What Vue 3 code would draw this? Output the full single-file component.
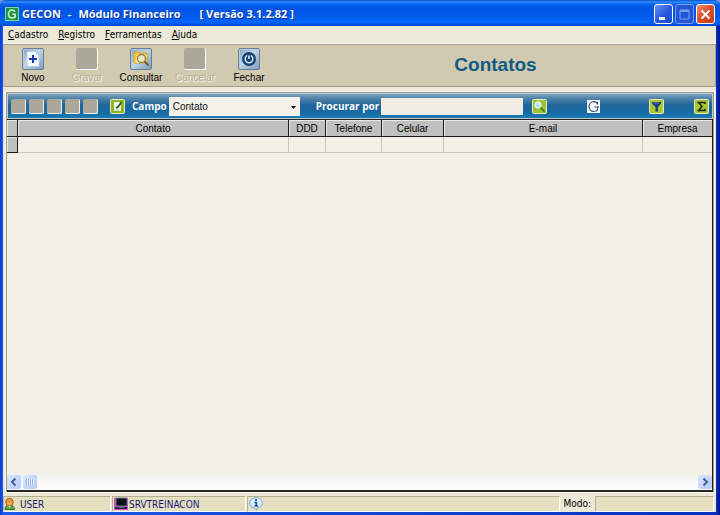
<script setup>
import { ref } from 'vue'

const menus = ['Cadastro', 'Registro', 'Ferramentas', 'Ajuda']
const tools = [
  { label: 'Novo', icon: 'new' },
  { label: 'Gravar', icon: '', disabled: true },
  { label: 'Consultar', icon: 'find' },
  { label: 'Cancelar', icon: '', disabled: true },
  { label: 'Fechar', icon: 'power' },
]
const navigation = ['Primeiro', 'Anterior', 'Próximo', 'Último', 'Atualizar']
const columns = [
  { label: 'Contato', name: 'contact' },
  { label: 'DDD', name: 'ddd' },
  { label: 'Telefone', name: 'phone' },
  { label: 'Celular', name: 'mobile' },
  { label: 'E-mail', name: 'email' },
  { label: 'Empresa', name: 'company' },
]
const field = ref('Contato')
const query = ref('')
</script>

<template>
  <div class="window">
    <header class="titlebar">
      <svg class="app-icon" viewBox="0 0 14 14" aria-hidden="true">
        <rect width="14" height="14" rx="1" fill="#8fcf9c" />
        <rect x="1" y="1" width="12" height="12" fill="#169447" />
        <path d="M10 4.6C9.3 3.6 8.4 3.1 7 3.1C4.7 3.1 3.5 4.8 3.5 7S4.8 10.9 7 10.9C8.4 10.9 9.5 10.5 10.2 9.9V7.2H7.2" fill="none" stroke="#c9f0c9" stroke-width="1.6" />
      </svg>
      <h1 class="title">
        <span>GECON</span><span>-</span><span class="module">Módulo Financeiro</span><span>[ Versão 3.1.2.82 ]</span>
      </h1>
      <div class="controls">
        <button class="control" type="button" aria-label="Minimizar">
          <svg viewBox="0 0 17 17"><rect x="4" y="11" width="6" height="3" fill="#fff" /></svg>
        </button>
        <button class="control dimmed" type="button" aria-label="Maximizar" disabled>
          <svg viewBox="0 0 17 17"><path d="M4 4h9v9H4z" fill="none" stroke="#7e9df0" /><path d="M4 5h9" stroke="#7e9df0" stroke-width="2" /></svg>
        </button>
        <button class="control close" type="button" aria-label="Fechar janela">
          <svg viewBox="0 0 17 17"><path d="M4.500 4.500l8 8M12.500 4.500l-8 8" stroke="#fff" stroke-width="2" /></svg>
        </button>
      </div>
    </header>

    <div class="client">
      <nav class="menubar">
        <button v-for="menu in menus" :key="menu" class="menu" type="button"><u>{{ menu[0] }}</u>{{ menu.slice(1) }}</button>
      </nav>

      <div class="toolbar">
        <div class="tools">
          <button v-for="tool in tools" :key="tool.label" class="tool" type="button" :disabled="tool.disabled">
            <span v-if="tool.disabled" class="blank"></span>
            <svg v-else class="tool-icon" viewBox="0 0 22 22" aria-hidden="true">
              <defs>
                <linearGradient :id="'face-' + tool.icon" x1="0" y1="0" x2="1" y2="1">
                  <stop offset="0" stop-color="#7f9fbd" /><stop offset=".45" stop-color="#c4d6e6" /><stop offset="1" stop-color="#7899bb" />
                </linearGradient>
              </defs>
              <rect x=".5" y=".5" width="21" height="21" rx="1.5" :fill="'url(#face-' + tool.icon + ')'" stroke="#687f99" />
              <path d="M1.500 20V1.500H20" fill="none" stroke="#b7c8d8" />
              <g v-if="tool.icon === 'new'">
                <path d="M5 3.500h9l3 3v12H5z" fill="#f5faff" stroke="#b3cae4" />
                <path d="M14 3.500v3h3z" fill="#a7c3e4" />
                <path d="M11 7v8M7 11h8" stroke="#173bb5" stroke-width="2" />
              </g>
              <g v-else-if="tool.icon === 'find'">
                <path d="M4 15V6l1-2h4l1 1h7v10z" fill="#f2c542" stroke="#d4a32d" />
                <path d="M5 15l2-8h10l-2 8z" fill="#ffe27d" />
                <circle cx="11.500" cy="10.500" r="4" fill="#e8e9bd" stroke="#8e8250" stroke-width="1.300" />
                <path d="M14.500 13.500l4 4" stroke="#6d5a37" stroke-width="1.800" />
              </g>
              <g v-else>
                <circle cx="11" cy="11" r="7" fill="#124276" />
                <circle cx="11" cy="11" r="3.800" fill="none" stroke="#e8f3fb" stroke-width="1.500" />
                <path d="M11 6v5" stroke="#124276" stroke-width="3.500" /><path d="M11 7.500V11" stroke="#e8f3fb" stroke-width="1.500" />
              </g>
            </svg>
            <span class="tool-label">{{ tool.label }}</span>
          </button>
        </div>
        <h2 class="heading">Contatos</h2>
      </div>

      <main class="panel">
        <div class="filterbar">
          <div class="navigator">
            <button v-for="item in navigation" :key="item" class="nav-button" type="button" :aria-label="item" disabled></button>
          </div>
          <button class="icon-button edit" type="button" aria-label="Editar">
            <svg viewBox="0 0 15 15"><rect x=".5" y=".5" width="14" height="14" rx="1" fill="#8cb51f" stroke="#e4eec6" /><path d="M4 3h7v9H4z" fill="#f4f9ef" /><path d="M11.500 3L8 8l-2 1" fill="none" stroke="#34512c" stroke-width="1.700" /><path d="M5 11h4" stroke="#a6c4a6" /></svg>
          </button>
          <label class="caption" for="field">Campo</label>
          <div class="select-wrap">
            <select id="field" v-model="field" class="select">
              <option v-for="column in columns" :key="column.name">{{ column.label }}</option>
            </select>
            <svg class="arrow" viewBox="0 0 5 3" aria-hidden="true"><path d="M0 0h5L2.500 3z" fill="#111" /></svg>
          </div>
          <label class="caption search-caption" for="query">Procurar por</label>
          <input id="query" v-model="query" class="query" type="text" />
          <button class="icon-button search" type="button" aria-label="Procurar">
            <svg viewBox="0 0 15 15"><rect x=".5" y=".5" width="14" height="14" rx="1" fill="#9bc332" stroke="#e4eec6" /><circle cx="6" cy="6" r="3.200" fill="#b9e8ff" stroke="#eafaff" /><path d="M8.500 8.500l4 4" stroke="#476f24" stroke-width="1.700" /></svg>
          </button>
          <div class="right-icons">
            <button class="icon-button google" type="button" aria-label="Pesquisar na web">
              <svg viewBox="0 0 15 15"><path d="M1 1h13v13H1z" fill="#f8faff" /><path d="M11.500 5.500V2.800M11.500 5C11 3.500 9.700 2.700 7.800 2.700C5 2.700 3 4.800 3 7.600S5 12.500 7.800 12.500C9.400 12.500 10.700 12 11.500 11.200V8M8.300 8h4.700" fill="none" stroke="#33527f" stroke-width="1.200" /></svg>
            </button>
            <button class="icon-button" type="button" aria-label="Filtrar">
              <svg viewBox="0 0 15 15"><rect x=".5" y=".5" width="14" height="14" rx="1" fill="#a9c62c" stroke="#e4eec6" /><path d="M3 3h9v1.500L9 8v4.500H6.500V8L3 4.500z" fill="#173f8a" /><path d="M5 4h5" stroke="#6486bf" /></svg>
            </button>
            <button class="icon-button" type="button" aria-label="Somar">
              <svg viewBox="0 0 15 15"><rect x=".5" y=".5" width="14" height="14" rx="1" fill="#a9c62c" stroke="#e4eec6" /><path d="M11 5V3.500H4.500L8 7.400L4.500 11.500H11V9.800" fill="none" stroke="#172512" stroke-width="1.500" /></svg>
            </button>
          </div>
        </div>

        <div class="grid">
          <table class="table">
            <colgroup>
              <col class="marker" /><col v-for="column in columns" :key="column.name" :class="column.name" />
            </colgroup>
            <thead>
              <tr><th></th><th v-for="column in columns" :key="column.name" scope="col">{{ column.label }}</th></tr>
            </thead>
            <tbody>
              <tr><th scope="row"></th><td v-for="column in columns" :key="column.name"></td></tr>
            </tbody>
          </table>
          <div class="scrollbar">
            <div class="scroll-start">
              <button class="scroll-button" type="button" aria-label="Rolar para a esquerda"><svg viewBox="0 0 14 14"><path d="M8.500 3.500L5 7l3.500 3.500" fill="none" stroke="#45618f" stroke-width="2" /></svg></button>
              <div class="thumb"><svg viewBox="0 0 14 14"><path d="M3.500 4v6M5.500 4v6M7.500 4v6M9.500 4v6" stroke="#94b1ef" /><path d="M4.500 4v6M6.500 4v6M8.500 4v6M10.500 4v6" stroke="#eef4ff" /></svg></div>
            </div>
            <button class="scroll-button" type="button" aria-label="Rolar para a direita"><svg viewBox="0 0 14 14"><path d="M5.500 3.500L9 7l-3.500 3.500" fill="none" stroke="#45618f" stroke-width="2" /></svg></button>
          </div>
        </div>
      </main>

      <footer class="statusbar">
        <div class="status user">
          <svg class="status-icon" viewBox="1 0 13 14" aria-hidden="true"><path d="M1.500 12.500C1.500 9.500 3 8 6 8s5 1.500 5 4.500z" fill="#5ba83c" stroke="#357a2a" /><path d="M4.500 8L6 11l2-3z" fill="#fff" /><circle cx="6" cy="5" r="3.800" fill="#e8983f" stroke="#b06322" /><path d="M4 5q2 2 4 0v2q-2 2-4 0z" fill="#f4b565" /></svg>
          USER
        </div>
        <div class="status server">
          <svg class="status-icon" viewBox="0 0 14 14" aria-hidden="true"><path d="M0 1h14v12H0z" fill="#d24dc6" /><path d="M2 1h11v8H2z" fill="#0c101d" stroke="#777990" /><path d="M1 10h12v2H1z" fill="#22233a" /><path d="M5 9h5v2H5z" fill="#6d6d82" /></svg>
          SRVTREINACON
        </div>
        <div class="status info">
          <svg class="status-icon" viewBox="0 0 14 14" aria-hidden="true"><path d="M7 .7C3.300 .7 .7 3 .7 6c0 2.500 1.800 4.500 4.600 5L8 13.400V11c3.200-.4 5.300-2.500 5.300-5C13.300 3 10.700 .7 7 .7z" fill="#dcecff" stroke="#7da7cd" /><path d="M7 2v2M5.500 5.500H7.300V9M5.500 9h3.500" fill="none" stroke="#1556a3" stroke-width="1.700" /></svg>
        </div>
        <div class="mode">Modo:</div>
        <div class="status mode-value"></div>
      </footer>
    </div>
  </div>
</template>

<style>
body {
  background: #7e93d8;
}
</style>

<style scoped>
* {
  box-sizing: border-box;
}
button {
  margin: 0;
  padding: 0;
  border: 0;
  background: none;
  color: inherit;
  font: inherit;
}
svg {
  display: block;
}
.window {
  display: flex;
  flex-direction: column;
  min-height: 100vh;
  padding: 0 4px 3px 3px;
  border-radius: 6px 6px 0 0;
  background: linear-gradient(90deg, #0a3bd8 0, #1a5ae8 3px, #0831c0 calc(100% - 4px), #00138c 100%);
  color: #000;
  font-family: "DejaVu Sans Condensed", "DejaVu Sans", sans-serif;
  font-size: 10px;
}
.titlebar {
  display: flex;
  align-items: center;
  height: 26px;
  margin: 0 -4px 0 -3px;
  padding: 2px 5px 0 5px;
  border-radius: 6px 6px 0 0;
  background: linear-gradient(#0a50c8 0, #2f8cff 2px, #0a62ee 4px, #0054e3 8px, #0058ea 16px, #0066ff 22px, #0046cf 26px);
}
.app-icon {
  width: 14px;
  height: 14px;
  margin-right: 3px;
}
.title {
  display: flex;
  gap: 7px;
  margin: 0;
  color: #fff;
  font-family: "Open Sans", "Noto Sans", sans-serif;
  font-size: 11px;
  font-weight: 700;
  line-height: 20px;
  text-shadow: 1px 1px #06309a;
  white-space: pre;
}
.module {
  margin-right: 12px;
}
.controls {
  display: flex;
  gap: 2px;
  margin-left: auto;
}
.control {
  width: 19px;
  height: 20px;
  border: 1px solid #fff;
  border-radius: 3px;
  background: linear-gradient(135deg, #6b93f3, #2a5be0 50%, #1b49d0);
}
.control.dimmed {
  border-color: #7c9cf0;
  background: #2456da;
}
.control.close {
  background: linear-gradient(135deg, #f0977c, #dd4f2b 45%, #c53a14);
}
.client {
  display: flex;
  flex: 1;
  flex-direction: column;
  background: #ece9d8;
}
.menubar {
  display: flex;
  gap: 10px;
  height: 18px;
  padding: 0 5px;
  border-bottom: 1px solid #fff;
  background: #ece9d8;
}
.menu {
  line-height: 16px;
}
.toolbar {
  display: flex;
  height: 43px;
  border: 1px solid #a29c88;
  border-left-color: #c5bea6;
  background: #d2cab0;
}
.tools {
  display: flex;
  margin-left: 2px;
}
.tool {
  display: flex;
  flex-direction: column;
  align-items: center;
  gap: 1px;
  width: 54px;
  padding-top: 3px;
  font-family: "Liberation Sans", sans-serif;
}
.tool-icon {
  width: 22px;
  height: 22px;
}
.blank {
  width: 22px;
  height: 22px;
  border: solid #fff;
  border-width: 0 1px 1px 0;
  border-radius: 2px;
  background: #aca899;
}
.tool-label {
  line-height: 13px;
}
.tool:disabled {
  color: #b9b29c;
  text-shadow: 1px 1px #f4f1e6;
}
.heading {
  flex: 1;
  margin: 0;
  color: #0f5a84;
  font-family: "Liberation Sans", sans-serif;
  font-size: 19px;
  font-weight: 700;
  line-height: 40px;
  text-align: center;
}
.panel {
  display: flex;
  flex: 1;
  flex-direction: column;
  margin: 5px 2px 4px 3px;
  border: 1px solid #9d9a8b;
  border-bottom: 0;
  outline: 1px solid #f8f6ee;
}
.filterbar {
  display: flex;
  align-items: center;
  height: 26px;
  padding: 0 3px;
  border: 1px solid #b9c9d0;
  background: linear-gradient(#7ba1bb 0, #4b80a8 5px, #20649a 11px, #1669a3 18px, #1c7bb4 100%);
}
.navigator {
  display: flex;
  gap: 3px;
}
.nav-button {
  width: 15px;
  height: 15px;
  border: solid #f1f0e8;
  border-width: 0 1px 1px 0;
  border-radius: 2px;
  background: #aca899;
}
.icon-button {
  flex: none;
  width: 15px;
  height: 15px;
}
.edit {
  margin: 0 7px 0 12px;
}
.caption {
  color: #fff;
  font-family: "Open Sans", "Noto Sans", sans-serif;
  font-size: 10px;
  font-weight: 700;
  line-height: 18px;
  white-space: nowrap;
}
.select-wrap {
  position: relative;
  flex: none;
  width: 131px;
  margin-left: 2px;
}
.select {
  display: block;
  appearance: none;
  width: 100%;
  height: 19px;
  padding: 0 14px 0 4px;
  border: 0;
  border-radius: 0;
  background: #f3f1e9;
  color: #111;
  font-family: "Liberation Sans", sans-serif;
  font-size: 10px;
}
.arrow {
  position: absolute;
  top: 9px;
  right: 4px;
  width: 5px;
  height: 3px;
  pointer-events: none;
}
.search-caption {
  margin-left: 16px;
}
.query {
  width: 142px;
  height: 17px;
  margin-left: 2px;
  padding: 0 3px;
  border: 0;
  background: #f0ede5;
  font: 10px "Liberation Sans", sans-serif;
}
.search {
  margin-left: 9px;
}
.right-icons {
  display: flex;
  flex: 1;
  justify-content: space-between;
  margin-left: 39px;
}
.google {
  margin-right: 18px;
}
.grid {
  display: flex;
  flex: 1;
  flex-direction: column;
  border: solid #26251f;
  border-width: 1px 1px 2px 0;
  background: #f3f0e8;
}
.table {
  width: 100%;
  border-collapse: separate;
  border-spacing: 0;
  table-layout: fixed;
  font-family: "Liberation Sans", sans-serif;
}
.marker {
  width: 11px;
}
.ddd {
  width: 37px;
}
.phone {
  width: 56px;
}
.mobile {
  width: 62px;
}
.email {
  width: 199px;
}
.company {
  width: 69px;
}
th {
  height: 17px;
  padding: 1px 0 0;
  border: solid #1d1d1d;
  border-width: 0 1px 1px 0;
  background: #c0c0c0;
  box-shadow: inset 1px 1px #e9e9e9;
  font-weight: 400;
  line-height: 15px;
}
tbody th {
  height: 16px;
}
th:last-child,
td:last-child {
  border-right: 0;
}
td {
  padding: 0;
  border: solid #c8c6be;
  border-width: 0 1px 1px 0;
}
.scrollbar {
  display: flex;
  justify-content: space-between;
  margin-top: auto;
  padding: 1px 0;
  background: linear-gradient(#f1f1ec, #fff);
}
.scroll-start {
  display: flex;
  gap: 2px;
}
.scroll-button,
.thumb {
  width: 14px;
  height: 14px;
  border-radius: 2px;
  background: linear-gradient(135deg, #dbe7ff, #b4c9f7);
}
.statusbar {
  display: flex;
  height: 16px;
  background: #ece9d8;
}
.status {
  display: flex;
  align-items: center;
  gap: 2px;
  padding-left: 1px;
  border: 1px solid #fff;
  border-top-color: #b5b094;
  border-left-color: #b5b094;
  background: #e6e0c0;
  color: #17177a;
}
.status-icon {
  flex: none;
  width: 14px;
  height: 14px;
}
.user {
  width: 108px;
  padding-left: 0;
}
.server {
  width: 134px;
  margin-left: 1px;
}
.server .status-icon {
  margin-right: -1px;
}
.info {
  flex: 1;
  margin-left: 1px;
}
.mode {
  padding: 0 4px 0 3px;
  line-height: 16px;
}
.mode-value {
  width: 119px;
  margin-right: 2px;
}
</style>
